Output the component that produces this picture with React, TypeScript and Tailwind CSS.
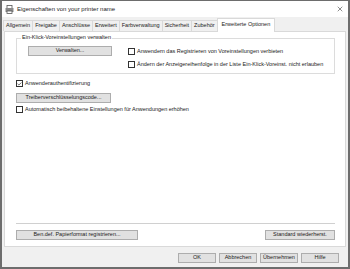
import { Check, X } from 'lucide-react';

const Btn = ({ label, w }: { label: string; w: string }) => (
    <div className={`${w} h-[10px] flex items-center justify-center bg-[#e1e1e1] border border-[#adadad] text-[5.5px] leading-none whitespace-nowrap`}>
        {label}
    </div>
);

const Box = ({ label, checked }: { label: string; checked?: boolean }) => (
    <div className="flex items-center gap-[2px] h-[9px] whitespace-nowrap">
        <div className="w-[7px] h-[7px] border border-[#333] bg-white flex items-center justify-center shrink-0">
            {checked ? <Check size={6} strokeWidth={3} /> : null}
        </div>
        <span className="text-[5.5px] leading-none">{label}</span>
    </div>
);

const tabs = ["Allgemein", "Freigabe", "Anschlüsse", "Erweitert", "Farbverwaltung", "Sicherheit", "Zubehör"];

const App = () => {
    return (
        <div className="w-[350px] h-[269px] bg-[#f0f0f0] border-x-2 border-b-2 border-t border-[#6d6d6d] flex flex-col text-[#1a1a1a]" style={{ fontFamily: '"Liberation Sans", Arial, sans-serif' }}>

            {/* title bar */}
            <div className="h-[16px] bg-white flex items-center pl-[3px] pr-[4px]">
                <svg width="9" height="9" viewBox="0 0 9 9" className="mr-[3px]">
                    <rect x="2" y="0.5" width="5" height="3" fill="#fff" stroke="#555" strokeWidth="0.8" />
                    <rect x="0.5" y="3" width="8" height="4" fill="#8a8a8a" />
                    <rect x="2" y="6" width="5" height="2.5" fill="#fff" stroke="#555" strokeWidth="0.8" />
                </svg>
                <span className="text-[6px] leading-none">Eigenschaften von your printer name</span>
                <div className="flex-1" />
                <X size={8} strokeWidth={1.5} />
            </div>

            {/* tabs */}
            <div className="flex items-end h-[14px] pl-[2px] whitespace-nowrap">
                {tabs.map(t =>
                    <div key={t} className="h-[11px] px-[2px] border border-[#d9d9d9] border-b-0 -ml-px flex items-center text-[5.5px] leading-none bg-[#f0f0f0]">
                        {t}
                    </div>
                )}
                <div className="h-[14px] px-[4px] border border-[#d9d9d9] border-b-0 -ml-px flex items-start pt-[3px] text-[5.5px] leading-none bg-white relative top-px">
                    Erweiterte Optionen
                </div>
            </div>

            {/* panel */}
            <div className="mx-[2px] h-[216px] bg-white border border-[#d9d9d9] flex flex-col pl-[11px] pr-[10px]">
                <div className="relative mt-[6px] h-[36px] border border-[#dcdcdc] flex pl-[11px] pt-[7px] gap-[16px]">
                    <span className="absolute -top-[4px] left-[4px] bg-white px-px text-[5.5px] leading-none whitespace-nowrap">Ein-Klick-Voreinstellungen verwalten</span>
                    <Btn label="Verwalten..." w="w-[84px]" />
                    <div className="flex flex-col gap-[4px] pt-[1px]">
                        <Box label="Anwendern das Registrieren von Voreinstellungen verbieten" />
                        <Box label="Ändern der Anzeigereihenfolge in der Liste Ein-Klick-Voreinst. nicht erlauben" />
                    </div>
                </div>

                <div className="mt-[5px]">
                    <Box label="Anwenderauthentifizierung" checked />
                </div>
                <div className="mt-[5px]">
                    <Btn label="Treiberverschlüsselungscode..." w="w-[95px]" />
                </div>
                <div className="mt-[2px]">
                    <Box label="Automatisch beibehaltene Einstellungen für Anwendungen erhöhen" />
                </div>

                <div className="flex-1" />
                <div className="h-px bg-[#d0d0d0]" />
                <div className="flex justify-between mt-[6px] mb-[6px]">
                    <Btn label="Ben.def. Papierformat registrieren..." w="w-[122px]" />
                    <Btn label="Standard wiederherst." w="w-[70px]" />
                </div>
            </div>

            {/* bottom buttons */}
            <div className="flex justify-end gap-[3px] pr-[9px] mt-[6px]">
                <Btn label="OK" w="w-[38px]" />
                <Btn label="Abbrechen" w="w-[38px]" />
                <Btn label="Übernehmen" w="w-[38px]" />
                <Btn label="Hilfe" w="w-[38px]" />
            </div>
        </div>
    )
}

export default App;
